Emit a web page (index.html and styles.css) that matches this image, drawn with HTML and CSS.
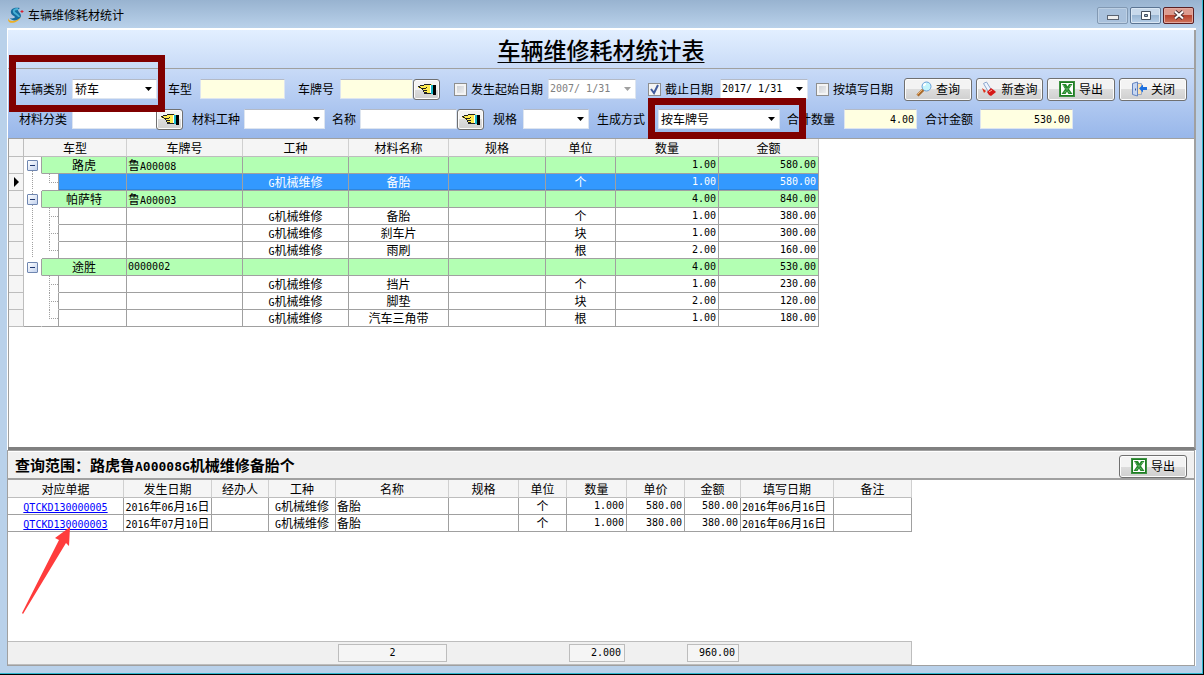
FILE: index.html
```html
<!DOCTYPE html>
<html lang="zh-CN">
<head>
<meta charset="utf-8">
<title>车辆维修耗材统计</title>
<link rel="stylesheet" href="styles.css">
</head>
<body>
<svg class="defs" width="0" height="0" aria-hidden="true">
  <symbol id="hand" viewBox="0 0 18 12">
    <path d="M0 3h2v-1h4v-1h8v10h-8v-4h-1v-1h-3v-1h-2z" fill="#ffec50"/>
    <path d="M6 1h7v1h-7zM2 2h4v1h-4zM0 3h2v1h-2zM1 4h2v1h-2zM3 5h5v1h-5zM4 6h1v1h-1zM5 7h4v1h-4zM5 8h1v1h-1zM6 9h3v1h-3zM6 10h7v1h-7zM8 4h1v1h-1z" fill="#222"/>
    <path d="M12 2h1v8h-1z" fill="#fff"/>
    <path d="M13 2h2v9h-2z" fill="#18b8c8"/>
    <path d="M15 2h3v10h-3z" fill="#000"/>
  </symbol>
  <symbol id="excel" viewBox="0 0 16 16">
    <rect width="16" height="16" fill="#1e7b24"/>
    <path d="M.5 .5h15v15h-15z" fill="none" stroke="#5aa85c" stroke-dasharray="1 1"/>
    <rect x="2" y="2" width="12" height="12" fill="#fff"/>
    <path d="M3 3h4l1.500 2.500 1.500-2.500h3.500l-3.500 5 3.500 5h-4l-1.500-2.500-1.500 2.500h-4l3.500-5z" fill="#238a2a"/>
    <path d="M4 4l7 8M12 4l-7 8" stroke="#8cc890" stroke-dasharray="1 1"/>
  </symbol>
</svg>

<header class="titlebar">
  <svg class="app-icon" viewBox="0 0 16 16" aria-hidden="true">
    <path d="M12 1C7 0 2 1 3 6c1 3 4 3 4 4 0 1-3 2-5 1 2 4 10 3 11-2 0-3-3-4-3-6 0-1 1-1 2-2z" fill="#146c9e"/>
    <path d="M10 2C7 2 5 3 6 5c1 2 5 3 5 5" fill="none" stroke="#48b0d4" stroke-width="2"/>
    <path d="M0 11c0 4 9 4 13-1-3 6-12 8-13 3z" fill="#f0b020"/>
    <path d="M14 3v3M12.500 4.500h3" stroke="#d82030"/>
  </svg>
  <h1 class="titlebar-text">车辆维修耗材统计</h1>
  <div class="window-controls">
    <button class="win-btn win-min" aria-label="最小化"><svg viewBox="0 0 12 10"><rect x=".5" y="5.500" width="11" height="4" fill="#eee" stroke="#596270"/></svg></button>
    <button class="win-btn" aria-label="最大化"><svg viewBox="0 0 12 10"><path d="M1.500 1.500h9v8h-9z" fill="#fff" stroke="#46505f"/><path d="M4.500 4.500h3v2h-3z" fill="#9db7d2" stroke="#46505f"/></svg></button>
    <button class="win-btn win-close" aria-label="关闭窗口"><svg viewBox="0 0 12 10"><path d="M2 1.500l8 7M10 1.500l-8 7" stroke="#4b3033" stroke-width="4"/><path d="M2 1.500l8 7M10 1.500l-8 7" stroke="#fff" stroke-width="2"/></svg></button>
  </div>
</header>

<main class="window">
  <section class="upper">
    <div class="banner"><h2 class="banner-title">车辆维修耗材统计表</h2></div>

    <form class="filters">
      <div class="filter-row filter-row-one">
        <label for="category">车辆类别</label>
        <select id="category" class="field w-85"><option>轿车</option></select>
        <label for="model">车型</label>
        <input id="model" class="field field-yellow w-85" type="text">
        <label for="plate">车牌号</label>
        <input id="plate" class="field field-yellow w-73" type="text">
        <button type="button" class="btn btn-hand" aria-label="选择车牌号"><svg viewBox="0 0 18 12"><use href="#hand"/></svg></button>
        <label class="check"><input type="checkbox">发生起始日期</label>
        <select class="field field-date w-88" aria-label="发生起始日期" disabled><option>2007/&nbsp;1/31</option></select>
        <label class="check"><input type="checkbox" checked>截止日期</label>
        <select class="field field-date w-88" aria-label="截止日期"><option>2017/&nbsp;1/31</option></select>
        <label class="check"><input type="checkbox">按填写日期</label>
        <div class="actions">
          <button type="button" class="btn"><svg class="icon" viewBox="0 0 16 16"><path d="M1.500 14.500l6-6" stroke="#a86a2c" stroke-width="3"/><path d="M1.500 13.500l5-5" stroke="#f0b878"/><circle cx="10.500" cy="5.500" r="4.500" fill="#c4f4fc" stroke="#6b9fd8"/><path d="M8 5c0-1 1-2 2-2" fill="none" stroke="#fff" stroke-width="2"/></svg>查询</button>
          <button type="button" class="btn btn-narrow"><svg class="icon" viewBox="0 0 16 16"><path d="M2.500 2.500l3-1.500 5 8-3 2z" fill="#eef5ff" stroke="#8ea7cc"/><path d="M6 11l4-4 4 3 1 1-5 4-2-1z" fill="#d51818"/><path d="M8 11l3-2" stroke="#ffb0a0"/><path d="M1 7l4 3-2 2z" fill="#e03018"/></svg>新查询</button>
          <button type="button" class="btn"><svg class="icon" viewBox="0 0 16 16"><use href="#excel"/></svg>导出</button>
          <button type="button" class="btn"><svg class="icon" viewBox="0 0 16 16"><path d="M5.500 2.500h5v11h-5z" fill="#fbe0b0" stroke="#98a8c8"/><path d="M1.500 2.500l5-1.500v14l-5-1.500z" fill="#c5d6f2" stroke="#6484c0"/><path d="M4.500 7.500v2" stroke="#3c5ca0"/><path d="M8 7.500l4-4v2.500h4v3h-4v2.500z" fill="#1c70e0"/></svg>关闭</button>
        </div>
      </div>
      <div class="filter-row filter-row-two">
        <label for="material">材料分类</label>
        <input id="material" class="field w-85" type="text">
        <button type="button" class="btn btn-hand" aria-label="选择材料分类"><svg viewBox="0 0 18 12"><use href="#hand"/></svg></button>
        <label for="work">材料工种</label>
        <select id="work" class="field w-81"><option></option></select>
        <label for="name">名称</label>
        <input id="name" class="field w-97" type="text">
        <button type="button" class="btn btn-hand" aria-label="选择名称"><svg viewBox="0 0 18 12"><use href="#hand"/></svg></button>
        <label for="spec">规格</label>
        <select id="spec" class="field w-66"><option></option></select>
        <label for="mode">生成方式</label>
        <select id="mode" class="field w-122"><option>按车牌号</option></select>
        <label for="sum-count">合计数量</label>
        <input id="sum-count" class="field field-yellow field-num w-73" type="text" value="4.00">
        <label for="sum-amount">合计金额</label>
        <input id="sum-amount" class="field field-yellow field-num w-93" type="text" value="530.00">
      </div>
      <span class="mark mark-category"></span>
      <span class="mark mark-mode"></span>
    </form>

    <div class="grid-area">
      <table class="grid summary">
        <colgroup><col class="c15"><col class="c18"><col class="c17"><col class="c68"><col class="c116"><col class="c106"><col class="c100"><col class="c97"><col class="c70"><col class="c103"><col class="c100"></colgroup>
        <thead><tr><th class="ind"></th><th colspan="3">车型</th><th>车牌号</th><th>工种</th><th>材料名称</th><th>规格</th><th>单位</th><th>数量</th><th>金额</th></tr></thead>
        <tbody>
          <tr class="group"><td class="ind"></td><td class="toggle first"><button class="expander" aria-label="折叠路虎"></button></td><td colspan="2">路虎</td><td class="left">鲁<span class="n">A00008</span></td><td></td><td></td><td></td><td></td><td class="num">1.00</td><td class="num">580.00</td></tr>
          <tr class="selected"><td class="ind"><svg class="pointer" viewBox="0 0 6 10"><path d="M0 0l5 5-5 5z"/></svg></td><td class="trunk"></td><td class="branch end"></td><td></td><td></td><td><span class="n">G</span>机械维修</td><td>备胎</td><td></td><td>个</td><td class="num">1.00</td><td class="num">580.00</td></tr>
          <tr class="group"><td class="ind"></td><td class="toggle"><button class="expander" aria-label="折叠帕萨特"></button></td><td colspan="2">帕萨特</td><td class="left">鲁<span class="n">A00003</span></td><td></td><td></td><td></td><td></td><td class="num">4.00</td><td class="num">840.00</td></tr>
          <tr><td class="ind"></td><td class="trunk"></td><td class="branch"></td><td></td><td></td><td><span class="n">G</span>机械维修</td><td>备胎</td><td></td><td>个</td><td class="num">1.00</td><td class="num">380.00</td></tr>
          <tr><td class="ind"></td><td class="trunk"></td><td class="branch"></td><td></td><td></td><td><span class="n">G</span>机械维修</td><td>刹车片</td><td></td><td>块</td><td class="num">1.00</td><td class="num">300.00</td></tr>
          <tr><td class="ind"></td><td class="trunk"></td><td class="branch end"></td><td></td><td></td><td><span class="n">G</span>机械维修</td><td>雨刷</td><td></td><td>根</td><td class="num">2.00</td><td class="num">160.00</td></tr>
          <tr class="group"><td class="ind"></td><td class="toggle last"><button class="expander" aria-label="折叠途胜"></button></td><td colspan="2">途胜</td><td class="left num-text">0000002</td><td></td><td></td><td></td><td></td><td class="num">4.00</td><td class="num">530.00</td></tr>
          <tr><td class="ind"></td><td class="blank"></td><td class="branch"></td><td></td><td></td><td><span class="n">G</span>机械维修</td><td>挡片</td><td></td><td>个</td><td class="num">1.00</td><td class="num">230.00</td></tr>
          <tr><td class="ind"></td><td class="blank"></td><td class="branch"></td><td></td><td></td><td><span class="n">G</span>机械维修</td><td>脚垫</td><td></td><td>块</td><td class="num">2.00</td><td class="num">120.00</td></tr>
          <tr><td class="ind"></td><td class="blank bottom"></td><td class="branch end"></td><td></td><td></td><td><span class="n">G</span>机械维修</td><td>汽车三角带</td><td></td><td>根</td><td class="num">1.00</td><td class="num">180.00</td></tr>
        </tbody>
      </table>
    </div>
  </section>

  <section class="lower">
    <div class="detail-head">
      <h3 class="detail-title">查询范围：路虎鲁<span class="n-title">A00008G</span>机械维修备胎个</h3>
      <button type="button" class="btn"><svg class="icon" viewBox="0 0 16 16"><use href="#excel"/></svg>导出</button>
    </div>
    <div class="detail-body">
      <table class="grid detail">
        <colgroup><col class="c116"><col class="c88"><col class="c57"><col class="c67"><col class="c113"><col class="c70"><col class="c48"><col class="c60"><col class="c58"><col class="c56"><col class="c93"><col class="c78"></colgroup>
        <thead><tr><th>对应单据</th><th>发生日期</th><th>经办人</th><th>工种</th><th>名称</th><th>规格</th><th>单位</th><th>数量</th><th>单价</th><th>金额</th><th>填写日期</th><th>备注</th></tr></thead>
        <tbody>
          <tr><td><a class="n" href="#doc-5">QTCKD130000005</a></td><td><span class="n">2016</span>年<span class="n">06</span>月<span class="n">16</span>日</td><td></td><td><span class="n">G</span>机械维修</td><td class="left">备胎</td><td></td><td>个</td><td class="num">1.000</td><td class="num">580.00</td><td class="num">580.00</td><td class="left"><span class="n">2016</span>年<span class="n">06</span>月<span class="n">16</span>日</td><td></td></tr>
          <tr><td><a class="n" href="#doc-3">QTCKD130000003</a></td><td><span class="n">2016</span>年<span class="n">07</span>月<span class="n">10</span>日</td><td></td><td><span class="n">G</span>机械维修</td><td class="left">备胎</td><td></td><td>个</td><td class="num">1.000</td><td class="num">380.00</td><td class="num">380.00</td><td class="left"><span class="n">2016</span>年<span class="n">06</span>月<span class="n">16</span>日</td><td></td></tr>
        </tbody>
      </table>
      <svg class="arrow" viewBox="0 0 52 90" aria-hidden="true"><path d="M50 1L35 12L39 14L2 87L3 88L46 17L49 20Z" fill="#ff3c3c"/></svg>
    </div>
    <div class="totals">
      <output class="total total-rows">2</output>
      <output class="total total-count">2.000</output>
      <output class="total total-amount">960.00</output>
    </div>
  </section>
</main>
</body>
</html>
```

FILE: styles.css
```css
* { box-sizing: border-box; }

:root {
  --cjk: "Noto Sans CJK SC", sans-serif;
  --mono: "DejaVu Sans Mono", "Noto Sans CJK SC", monospace;
  --line: #a0a0a0;
  --line-soft: #bdbdbd;
}

body {
  margin: 0;
  height: 100vh;
  display: flex;
  flex-direction: column;
  background: #b9d1ea;
  border-right: 1px solid #000;
  border-bottom: 1px solid #000;
  box-shadow: inset -1px -1px 0 #30b8d0;
  font: 12px/16px var(--cjk);
  color: #000;
}

h1, h2, h3 { margin: 0; font-weight: 400; }
button, input, select { font: inherit; color: inherit; margin: 0; }
.defs { position: absolute; }

/* Title bar */
.titlebar {
  flex: none;
  display: flex;
  align-items: center;
  gap: 4px;
  height: 28px;
  padding: 2px 8px 0 8px;
  background: linear-gradient(#98b3d0, #b9d1ea);
  border-right: 1px solid #30b8d0;
}
.app-icon { width: 16px; height: 16px; }
.titlebar-text { flex: 1; font-size: 12px; line-height: 16px; }
.window-controls { display: flex; gap: 2px; }
.win-btn {
  display: grid;
  place-items: center;
  width: 31px;
  height: 17px;
  padding: 0;
  border: 1px solid #5b7492;
  border-radius: 2px;
  background: linear-gradient(#c8d9eb 50%, #9ab6d3 50%, #b6cfe8);
  box-shadow: inset 0 0 0 1px #d9e6f3;
}
.win-btn svg { width: 12px; height: 10px; }
.win-min { border-color: #8299b3; background: #a9c1dc; box-shadow: inset 0 0 0 1px #bdd0e4; }
.win-close {
  border-color: #5a1f22;
  background: linear-gradient(#dd9c90 50%, #b8422e 50%, #d0755c);
  box-shadow: inset 0 0 0 1px #e3a99f;
}

/* Client area */
.window {
  flex: 1;
  min-height: 0;
  display: flex;
  flex-direction: column;
  margin: 0 7px 8px 7px;
  border-top: 2px solid #fff;
  border-left: 1px solid #fff;
  background: #fff;
}
.upper {
  flex: 1;
  min-height: 0;
  display: flex;
  flex-direction: column;
  border-right: 2px solid var(--line);
  border-bottom: 3px solid #808080;
}
.banner {
  display: grid;
  place-items: center;
  height: 39px;
  border-bottom: 1px solid var(--line);
  background: linear-gradient(#e2efff, #c9dbf7);
}
.banner-title {
  font-size: 23px;
  line-height: 32px;
  font-weight: 500;
  text-decoration: underline;
  text-decoration-thickness: 1px;
  text-underline-offset: 3px;
}

/* Filters */
.filters {
  position: relative;
  display: grid;
  gap: 6px;
  padding: 8px 6px 7px 11px;
  border-bottom: 1px solid var(--line);
  background: linear-gradient(#c8daf7, #98b7ea);
}
.filter-row { display: grid; align-items: center; height: 24px; white-space: nowrap; }
.filter-row-one { grid-template-columns: 53px 96px 32px 98px 42px 73px 41px 94px 100px 72px 96px 88px 1fr; }
.filter-row-two { grid-template-columns: 53px 84px 36px 52px 88px 28px 97px 36px 30px 74px 61px 129px 57px 81px 55px 1fr; }

.field {
  height: 20px;
  padding: 0 2px;
  border: 1px solid #dde5f0;
  border-top-color: #b4bac6;
  border-radius: 1px;
  background-color: #fff;
  line-height: 16px;
}
select.field {
  appearance: none;
  background-image: url("data:image/svg+xml,%3Csvg xmlns='http://www.w3.org/2000/svg' width='7' height='4'%3E%3Cpath d='M0 0h7L3.500 4z'/%3E%3C/svg%3E");
  background-repeat: no-repeat;
  background-position: right 4px center;
}
select.field:disabled {
  opacity: 1;
  color: #808080;
  background-image: url("data:image/svg+xml,%3Csvg xmlns='http://www.w3.org/2000/svg' width='7' height='4'%3E%3Cpath fill='%23a0a0a0' d='M0 0h7L3.500 4z'/%3E%3C/svg%3E");
}
.field-yellow { background-color: #ffffe1; }
.field-date { padding: 0 1px; font-family: var(--mono); font-size: 10px; }
.field-num { font-family: var(--mono); font-size: 10px; text-align: right; }
.w-66 { width: 66px; }
.w-73 { width: 73px; }
.w-81 { width: 81px; }
.w-85 { width: 85px; }
.w-88 { width: 88px; }
.w-93 { width: 93px; }
.w-97 { width: 97px; }
.w-122 { width: 122px; }

.check { display: flex; align-items: center; gap: 4px; }
.check input {
  appearance: none;
  width: 13px;
  height: 13px;
  border: 1px solid #8e8f8f;
  background: linear-gradient(135deg, #c8ccd2, #f4f4f4);
  box-shadow: inset 0 0 0 2px #f4f4f4;
}
.check input:checked {
  background: #f4f4f4 url("data:image/svg+xml,%3Csvg xmlns='http://www.w3.org/2000/svg' width='11' height='11'%3E%3Cpath d='M2 5l3 4 4-8' fill='none' stroke='%23405a9c' stroke-width='2'/%3E%3C/svg%3E") center no-repeat;
  box-shadow: none;
}

.btn {
  display: flex;
  align-items: center;
  justify-content: center;
  gap: 4px;
  width: 68px;
  height: 23px;
  padding: 0;
  border: 1px solid #707070;
  border-radius: 3px;
  background: linear-gradient(#f3f3f3 50%, #dddddd 50%, #cfcfcf);
  box-shadow: inset 0 0 0 1px #fcfcfc;
}
.btn-narrow { width: 67px; }
.icon { width: 16px; height: 16px; }
.btn-hand { width: 27px; height: 21px; }
.btn-hand svg { width: 18px; height: 12px; shape-rendering: crispEdges; }
.actions { display: flex; gap: 4px; }

.mark { position: absolute; border: 7px solid #800000; pointer-events: none; }
.mark-category { left: 1px; top: -14px; width: 156px; height: 57px; }
.mark-mode { left: 640px; top: 29px; width: 158px; height: 41px; }

/* Data grids */
.grid-area { flex: 1; min-height: 0; border-left: 1px solid var(--line); }
.grid { border-collapse: separate; border-spacing: 0; table-layout: fixed; }
.summary { width: 810px; }
.detail { width: 904px; }
.grid th, .grid td {
  height: 17px;
  padding: 0;
  overflow: hidden;
  border-right: 1px solid var(--line);
  border-bottom: 1px solid var(--line);
  line-height: 16px;
  text-align: center;
  white-space: nowrap;
}
.grid th {
  height: 18px;
  border-color: var(--line-soft);
  border-right-color: #d0d0d0;
  background: #f5f5f5;
  font-weight: 400;
}
.grid .left { padding-left: 1px; text-align: left; }
.grid .num { padding-right: 2px; text-align: right; }
.num, .num-text, .n, .total { font-family: var(--mono); font-size: 10px; }
.n { line-height: 10px; }
.grid a { color: #0000ff; }

.group td { background: #b3ffb3; }
.selected td { background: #3399ff; color: #fff; box-shadow: inset 0 -1px 0 #2f86dc; }
.grid .ind { background: #f5f5f5; border-color: var(--line-soft); box-shadow: none; }
.pointer { display: block; width: 6px; height: 10px; margin-left: 5px; }

.grid .toggle, .grid .trunk, .grid .blank {
  border-bottom-color: transparent;
  background: #fff repeating-linear-gradient(#a0a0a0 0 1px, #fff 1px 2px) 8px 0 / 1px 100% no-repeat;
  background-clip: border-box;
  box-shadow: none;
}
.grid .trunk, .grid .blank { border-right-color: transparent; }
.grid .blank, .grid .toggle.last { background-image: none; }
.grid .toggle.first { background-position: 8px 12px; }
.grid .blank.bottom { border-bottom-color: var(--line); }
.grid .branch {
  border-bottom-color: transparent;
  background:
    repeating-linear-gradient(#a0a0a0 0 1px, #fff 1px 2px) 7px 0 / 1px 17px no-repeat,
    repeating-linear-gradient(90deg, #a0a0a0 0 1px, #fff 1px 2px) 7px 8px / 10px 1px no-repeat,
    #fff;
  background-clip: border-box;
  box-shadow: none;
}
.grid .branch.end {
  border-bottom-color: var(--line);
  background-size: 1px 8px, 10px 1px, auto;
}
.expander {
  display: block;
  width: 11px;
  height: 11px;
  margin-left: 3px;
  padding: 0;
  border: 1px solid #6f86b0;
  border-radius: 1px;
  background:
    linear-gradient(#203870, #203870) center / 5px 1px no-repeat,
    linear-gradient(135deg, #fff, #c3d2ee);
}

.c15 { width: 15px; } .c17 { width: 17px; } .c18 { width: 18px; }
.c48 { width: 48px; } .c56 { width: 56px; } .c57 { width: 57px; }
.c58 { width: 58px; } .c60 { width: 60px; } .c67 { width: 67px; }
.c68 { width: 68px; } .c70 { width: 70px; } .c78 { width: 78px; }
.c88 { width: 88px; } .c93 { width: 93px; } .c97 { width: 97px; }
.c100 { width: 100px; } .c103 { width: 103px; } .c106 { width: 106px; }
.c113 { width: 113px; } .c116 { width: 116px; }

/* Detail pane */
.lower {
  flex: 0 0 32vh;
  display: flex;
  flex-direction: column;
  border: 1px solid var(--line);
  border-left: 0;
  margin-right: 1px;
  box-shadow: -1px 0 0 var(--line);
}
.detail-head {
  display: flex;
  align-items: center;
  justify-content: space-between;
  height: 29px;
  padding: 2px 7px 0 7px;
  border-top: 1px solid #fff;
  border-bottom: 2px solid var(--line);
  background: #f0f0f0;
}
.detail-title { font-size: 15px; line-height: 22px; font-weight: 700; }
.n-title { font-family: var(--mono); font-size: 13px; }
.detail-body { position: relative; flex: 1; min-height: 0; }
.arrow { position: absolute; left: 12px; top: 46px; width: 52px; height: 90px; }
.totals {
  display: grid;
  grid-template-columns: 116px 88px 57px 67px 113px 70px 48px 60px 58px 56px 93px 78px;
  width: 904px;
  height: 24px;
  border-top: 1px solid var(--line-soft);
  border-right: 1px solid var(--line-soft);
  border-bottom: 1px solid var(--line-soft);
  background: #f0f0f0;
}
.total {
  height: 18px;
  margin: 2px;
  padding: 0 3px;
  border: 1px solid var(--line-soft);
  background: #f5f5f5;
  text-align: right;
}
.total-rows { grid-column: 5; text-align: center; }
.total-count { grid-column: 8; }
.total-amount { grid-column: 10; }
```
